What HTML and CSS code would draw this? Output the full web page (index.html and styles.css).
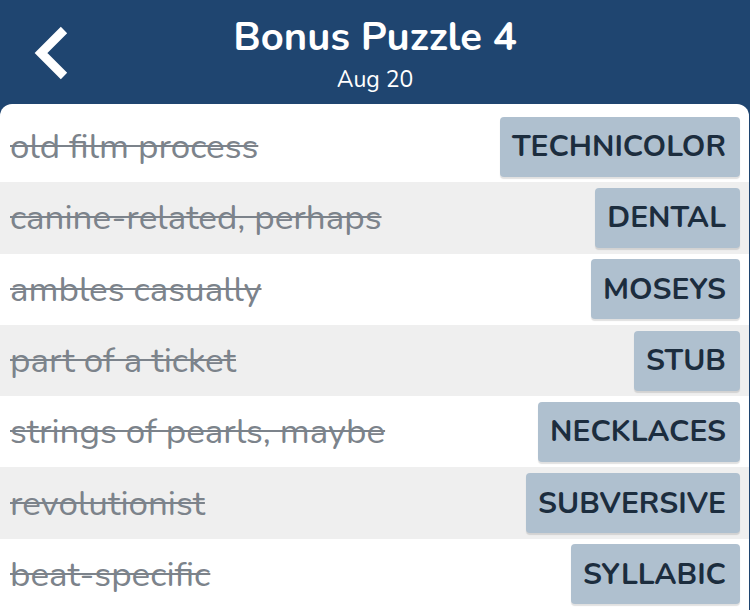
FILE: index.html
```html
<!DOCTYPE html>
<html>
<head>
<meta charset="utf-8">
<link rel="stylesheet" href="styles.css">
</head>
<body>
<div class="app">
  <header class="header">
    <button class="back" aria-label="Back">
      <svg width="36" height="56" viewBox="0 0 36 56"><path d="M31 5 L8 28 L31 51" fill="none" stroke="#fff" stroke-width="9" stroke-linecap="butt" stroke-linejoin="miter"/></svg>
    </button>
    <div class="titles">
      <h1 class="title">Bonus Puzzle 4</h1>
      <div class="subtitle">Aug 20</div>
    </div>
  </header>
  <main class="card">
    <div class="row"><span class="clue">old film process</span><span class="answer">TECHNICOLOR</span></div>
    <div class="row alt"><span class="clue">canine-related, perhaps</span><span class="answer">DENTAL</span></div>
    <div class="row"><span class="clue">ambles casually</span><span class="answer">MOSEYS</span></div>
    <div class="row alt"><span class="clue">part of a ticket</span><span class="answer">STUB</span></div>
    <div class="row"><span class="clue">strings of pearls, maybe</span><span class="answer">NECKLACES</span></div>
    <div class="row alt"><span class="clue">revolutionist</span><span class="answer">SUBVERSIVE</span></div>
    <div class="row"><span class="clue">beat-specific</span><span class="answer">SYLLABIC</span></div>
  </main>
</div>
</body>
</html>
```

FILE: styles.css
```css
* { box-sizing: border-box; }
html, body { margin: 0; padding: 0; }
body {
  background: #1f4570;
  font-family: "Nunito", Lato, "Open Sans", sans-serif;
  width: 750px;
  height: 610px;
  overflow: hidden;
}
.app { display: flex; flex-direction: column; }
.header {
  height: 104px;
  background: #1f4570;
  color: #fff;
  display: flex;
  align-items: flex-start;
  justify-content: center;
  position: relative;
}
.back {
  position: absolute;
  left: 33px;
  top: 25px;
  background: none;
  border: 0;
  padding: 0;
  width: 36px;
  height: 56px;
}
.back svg { display: block; }
.titles { display: flex; flex-direction: column; align-items: center; padding-top: 15px; }
.title {
  margin: 0;
  font-size: 40px;
  font-weight: 700;
  line-height: 44px;
}
.subtitle {
  font-size: 23px;
  line-height: 28px;
  margin-top: 7px;
}
.card {
  background: #fff;
  border-radius: 12px 12px 0 0;
  padding-top: 7px;
  margin-right: 1px;
}
.row {
  height: 71.3px;
  display: flex;
  align-items: center;
  justify-content: space-between;
  padding: 0 9px 0 10px;
}
.row.alt { background: #efefef; }
.clue {
  font-size: 35px;
  color: #7c838b;
  text-decoration: line-through;
  text-decoration-thickness: 2px;
}
.answer {
  height: 60px;
  display: flex;
  align-items: center;
  padding: 0 14px 0 12px;
  background: #afc0cf;
  color: #1c2d3e;
  font-weight: 700;
  font-size: 30px;
  border-radius: 4px;
  box-shadow: 0 2px 1px rgba(0,0,0,0.12);
}
```
